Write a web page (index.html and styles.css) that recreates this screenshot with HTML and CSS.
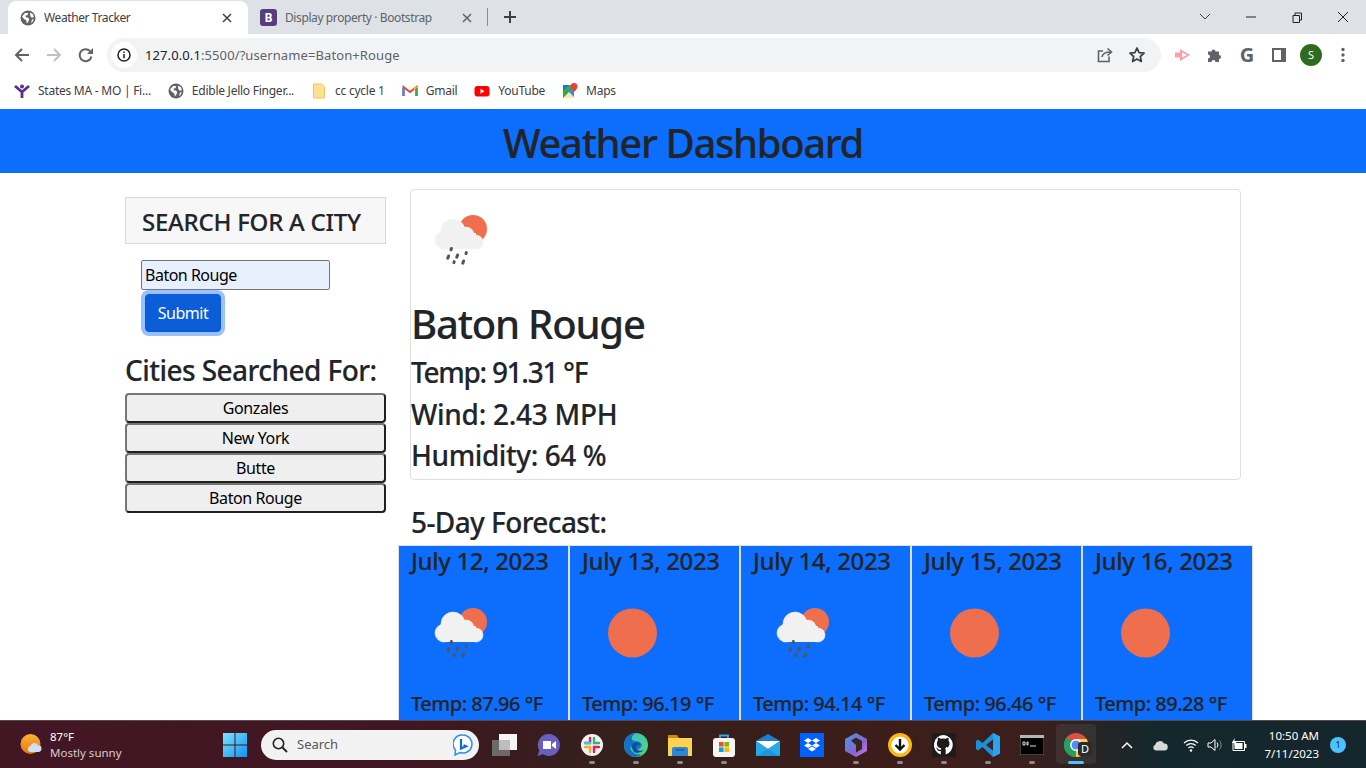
FILE: index.html
```html
<!DOCTYPE html>
<html lang="en">
<head>
    <meta charset="UTF-8">
    <meta name="viewport" content="width=device-width, initial-scale=1.0">
    <title>Weather Tracker</title>
    <link rel="stylesheet" href="styles.css">
</head>
<body>
    <svg class="defs" width="0" height="0">
        <symbol id="rainIcon" viewBox="0 0 100 100">
            <circle cx="62" cy="38" r="14" fill="#ee6e4d"/>
            <g fill="#f1f1f1" stroke="currentColor" stroke-width="0.6">
                <circle cx="33" cy="49" r="9"/>
                <circle cx="42" cy="40" r="12"/>
                <circle cx="55" cy="44" r="8"/>
                <circle cx="65" cy="51" r="7"/>
            </g>
            <path fill="#f1f1f1" d="M33 42h32v16H33z M30 46h5v12h-5z"/>
            <g stroke="#555" stroke-width="3" stroke-linecap="round">
                <path d="M40.4 57.5l-.4 1.4M37.6 65l-.8 2.2M46.6 64l-.8 2.2M55.3 61.6l-.3 1"/>
                <path d="M43.2 70.6l-.3 1M52.6 70l-.8 2.2"/>
            </g>
        </symbol>
        <symbol id="sunIcon" viewBox="0 0 100 100">
            <circle cx="50.5" cy="49" r="24.5" fill="#ee6e4d"/>
        </symbol>
        <symbol id="globe" viewBox="0 0 16 16">
            <circle cx="8" cy="8" r="7.5" fill="#5f6368"/>
            <path fill="#fff" d="M2 6.5l3-3.6 3.4.2-1 2.1-1.6.4-.2 1.6 2.4.4 1.2 1.6-.9 2.6-1.5 1.6-.5-3L3.8 8.8zM10 2.5l3 1.8.9 3-2.2.4-1.4-1.7zM12 9.5l1.8-.4-1.3 3-1.5 1z"/>
        </symbol>
    </svg>

    <!-- browser window chrome -->
    <div class="tabbar">
        <div class="tab tab-active">
            <svg class="favicon" width="16" height="16"><use href="#globe"/></svg>
            <span class="tab-title">Weather Tracker</span>
            <svg class="tab-close" width="10" height="10" viewBox="0 0 10 10"><path d="M1 1l8 8M9 1l-8 8" stroke="#3c4043" stroke-width="1.5"/></svg>
        </div>
        <div class="tab">
            <span class="bs-logo">B</span>
            <span class="tab-title">Display property · Bootstrap</span>
            <svg class="tab-close" width="10" height="10" viewBox="0 0 10 10"><path d="M1 1l8 8M9 1l-8 8" stroke="#5f6368" stroke-width="1.5"/></svg>
        </div>
        <span class="tab-sep"></span>
        <svg class="new-tab" width="14" height="14" viewBox="0 0 14 14"><path d="M7 1v12M1 7h12" stroke="#3c4043" stroke-width="2"/></svg>
        <div class="win-controls">
            <svg width="46" height="16" viewBox="0 0 46 16"><path d="M18 5l5 5 5-5" fill="none" stroke="#3c4043"/></svg>
            <svg width="46" height="16" viewBox="0 0 46 16"><path d="M18 8h10" stroke="#202124"/></svg>
            <svg width="46" height="16" viewBox="0 0 46 16"><path d="M19 6.5h6.5v7H19z M21 6V4h6.500v7H26" fill="none" stroke="#202124" stroke-linejoin="round"/></svg>
            <svg width="46" height="16" viewBox="0 0 46 16"><path d="M18 3l10 10M28 3L18 13" stroke="#202124"/></svg>
        </div>
    </div>

    <div class="toolbar">
        <svg class="nav-btn" width="16" height="16" viewBox="0 0 16 16"><path d="M15 8H2M8 2L2 8l6 6" fill="none" stroke="#5f6368" stroke-width="2"/></svg>
        <svg class="nav-btn" width="16" height="16" viewBox="0 0 16 16"><path d="M1 8h13M8 2l6 6-6 6" fill="none" stroke="#bdc1c6" stroke-width="2"/></svg>
        <svg class="nav-btn" width="16" height="16" viewBox="0 0 16 16"><path d="M13.5 9.5A6 6 0 1 1 12 4" fill="none" stroke="#5f6368" stroke-width="2"/><path d="M15 1v6H9z" fill="#5f6368"/></svg>
        <div class="omnibox">
            <span class="site-info">
                <svg width="14" height="14" viewBox="0 0 14 14"><circle cx="7" cy="7" r="6" fill="none" stroke="#202124" stroke-width="1.5"/><path d="M7 6v4.200M7 3.5V5" stroke="#202124" stroke-width="1.5"/></svg>
            </span>
            <span class="url"><b>127.0.0.1</b>:5500/?username=Baton+Rouge</span>
            <svg class="omni-icon" width="16" height="16" viewBox="0 0 16 16"><path d="M12 9.5v5H1.500V4H6M5 10c.5-3.500 3-5 8.500-5M10.500 1.500L14.500 5l-4 3.500" fill="none" stroke="#5f6368" stroke-width="1.6"/></svg>
            <svg class="omni-icon" width="18" height="18" viewBox="0 0 18 18"><path d="M9 2l2.100 4.700 5 .5-3.800 3.300 1.100 5L9 13l-4.400 2.500 1.100-5L1.900 7.200l5-.5z" fill="none" stroke="#3c4043" stroke-width="1.7" stroke-linejoin="round"/></svg>
        </div>
        <div class="ext-icons">
            <svg width="18" height="14" viewBox="0 0 18 14"><path d="M1 4.500h5V1l10 6-10 6V9.500H1z" fill="#ff9ea3"/><path d="M8 4.500l5 2.500-5 2.500z" fill="#fff"/></svg>
            <svg width="16" height="16" viewBox="0 0 16 16"><path d="M1 4.500h3.500a2 2 0 0 1 4 0H12v3.500a2 2 0 0 1 0 4v3H8.500a2 2 0 0 0-4 0H1v-3.500a2 2 0 0 0 0-4z" fill="#5f6368"/></svg>
            <span class="ext-g">G</span>
            <svg width="14" height="14" viewBox="0 0 14 14"><path d="M0 0h14v14H0z" fill="#5f6368"/><path d="M2 2h7v10H2z" fill="#fff"/></svg>
            <span class="avatar">S</span>
            <svg width="4" height="16" viewBox="0 0 4 16"><circle cx="2" cy="2.500" r="1.700" fill="#5f6368"/><circle cx="2" cy="8" r="1.700" fill="#5f6368"/><circle cx="2" cy="13.500" r="1.700" fill="#5f6368"/></svg>
        </div>
    </div>

    <div class="bookmarks">
        <a class="bookmark">
            <svg width="16" height="16" viewBox="0 0 16 16"><circle cx="8" cy="3.500" r="2" fill="#5c2d91"/><path d="M1 3l7 6 7-6M8 8v7" fill="none" stroke="#5c2d91" stroke-width="2.800"/></svg>
            <span>States MA - MO | Fi...</span>
        </a>
        <a class="bookmark">
            <svg width="16" height="16"><use href="#globe"/></svg>
            <span>Edible Jello Finger...</span>
        </a>
        <a class="bookmark">
            <svg width="16" height="16" viewBox="0 0 16 16"><path d="M2.500 1h8l3 3v11h-11z" fill="#fde293" stroke="#e8c65c"/></svg>
            <span>cc cycle 1</span>
        </a>
        <a class="bookmark">
            <svg width="16" height="16" viewBox="0 0 16 16"><path d="M1.500 13V4l6.500 5 6.500-5v9" fill="none" stroke="#ea4335" stroke-width="2"/><path d="M1.500 13V5" stroke="#4285f4" stroke-width="2.400"/><path d="M14.500 13V5" stroke="#34a853" stroke-width="2.400"/><path d="M12 6l2.500-2" stroke="#fbbc04" stroke-width="2"/></svg>
            <span>Gmail</span>
        </a>
        <a class="bookmark">
            <svg width="16" height="16" viewBox="0 0 16 16"><rect x="0.5" y="3" width="15" height="10.5" rx="3" fill="#f00"/><path d="M6.500 5.800l4 2.450-4 2.450z" fill="#fff"/></svg>
            <span>YouTube</span>
        </a>
        <a class="bookmark">
            <svg width="16" height="16" viewBox="0 0 16 16"><path d="M1 2h11v13H1z" fill="#34a853"/><path d="M1 15L12 4v11z" fill="#4285f4"/><path d="M1 15l6-6 6 6z" fill="#fbe9a7"/><path d="M1 2h6L1 8z" fill="#1a73e8"/><path d="M12 0a3.500 3.500 0 0 1 3.500 3.500C15.500 6 12 9 12 9S8.500 6 8.500 3.500A3.500 3.500 0 0 1 12 0z" fill="#ea4335"/></svg>
            <span>Maps</span>
        </a>
    </div>

    <!-- the page itself -->
    <div class="viewport">
        <header class="site-header">
            <h1>Weather Dashboard</h1>
        </header>

        <div class="container">
            <aside class="sidebar">
                <h4 class="search-title">SEARCH FOR A CITY</h4>
                <form class="search-form">
                    <input class="city-input" type="text" value="Baton Rouge">
                    <button class="submit-btn" type="button">Submit</button>
                </form>
                <h3 class="cities-title">Cities Searched For:</h3>
                <div class="city-list">
                    <button class="city-btn" type="button">Gonzales</button>
                    <button class="city-btn" type="button">New York</button>
                    <button class="city-btn" type="button">Butte</button>
                    <button class="city-btn" type="button">Baton Rouge</button>
                </div>
            </aside>

            <main class="content">
                <section class="current">
                    <svg class="weather-icon current-icon"><use href="#rainIcon"/></svg>
                    <h1>Baton Rouge</h1>
                    <h3 class="stat-temp">Temp: 91.31 °F</h3>
                    <h3 class="stat-wind">Wind: 2.43 MPH</h3>
                    <h3 class="stat-humidity">Humidity: 64 %</h3>
                </section>

                <h3 class="forecast-title">5-Day Forecast:</h3>
                <div class="forecast">
                    <div class="day">
                        <h4>July 12, 2023</h4>
                        <svg class="weather-icon"><use href="#rainIcon"/></svg>
                        <h5>Temp: 87.96 °F</h5>
                    </div>
                    <div class="day">
                        <h4>July 13, 2023</h4>
                        <svg class="weather-icon"><use href="#sunIcon"/></svg>
                        <h5>Temp: 96.19 °F</h5>
                    </div>
                    <div class="day">
                        <h4>July 14, 2023</h4>
                        <svg class="weather-icon"><use href="#rainIcon"/></svg>
                        <h5>Temp: 94.14 °F</h5>
                    </div>
                    <div class="day">
                        <h4>July 15, 2023</h4>
                        <svg class="weather-icon"><use href="#sunIcon"/></svg>
                        <h5>Temp: 96.46 °F</h5>
                    </div>
                    <div class="day">
                        <h4>July 16, 2023</h4>
                        <svg class="weather-icon"><use href="#sunIcon"/></svg>
                        <h5>Temp: 89.28 °F</h5>
                    </div>
                </div>
            </main>
        </div>
    </div>

    <!-- windows taskbar -->
    <footer class="taskbar">
        <div class="tb-weather">
            <svg width="24" height="24" viewBox="0 0 24 24"><defs><linearGradient id="wSun" x1="0" y1="0" x2="0" y2="1"><stop offset="0" stop-color="#f9b233"/><stop offset="1" stop-color="#e8760f"/></linearGradient></defs><circle cx="10.500" cy="11" r="10" fill="url(#wSun)"/><path d="M10 19a3 3 0 0 1 .5-5.900 4 4 0 0 1 7.500-.8 3.400 3.400 0 0 1 3.500 3.300A3.400 3.400 0 0 1 18 19z" fill="#cfe0f4"/></svg>
            <div class="tb-weather-text">
                <span class="tb-temp">87°F</span>
                <span class="tb-cond">Mostly sunny</span>
            </div>
        </div>
        <div class="tb-start">
            <svg width="24" height="24" viewBox="0 0 24 24"><defs><linearGradient id="winBlue" x1="0" y1="0" x2="1" y2="1"><stop offset="0" stop-color="#7de3fb"/><stop offset="1" stop-color="#0f94f2"/></linearGradient></defs><path d="M0 0h11.500v11.500H0zM12.500 0H24v11.500H12.500zM0 12.500h11.500V24H0zM12.500 12.500H24V24H12.500z" fill="url(#winBlue)"/></svg>
        </div>
        <div class="tb-search">
            <svg width="16" height="16" viewBox="0 0 16 16"><circle cx="6.500" cy="6.500" r="5.200" fill="none" stroke="#222" stroke-width="1.6"/><path d="M10.500 10.500l4.500 4.500" stroke="#222" stroke-width="1.8"/></svg>
            <span class="tb-search-label">Search</span>
            <svg class="tb-bing" width="20" height="22" viewBox="0 0 20 22"><path d="M10 1a9 9 0 1 1-3 17.500L2 21l.5-5A9 9 0 0 1 10 1z" fill="#fff" stroke="#2f8fe8" stroke-width="1.5"/><path d="M8 5v9.500l5-2.200-2.500-1" fill="none" stroke="#1166d8" stroke-width="2.2"/></svg>
        </div>
        <div class="tb-apps">
            <span class="tb-app">
                <svg width="26" height="24" viewBox="0 0 26 24"><rect x="8" y="1" width="18" height="16" fill="#f4f4f4"/><rect x="1" y="7" width="18" height="16" fill="#6a6a6a"/><rect x="8" y="7" width="11" height="10" fill="#bdbdbd"/></svg>
            </span>
            <span class="tb-app">
                <svg width="24" height="24" viewBox="0 0 24 24"><path d="M13 1a11 11 0 1 1-6 20.300L1.500 23l1.800-5.500A11 11 0 0 1 13 1z" fill="#6a5fc0"/><path d="M7 8h8v8H7zM16 11l4-3v8l-4-3z" fill="#fff"/></svg>
            </span>
            <span class="tb-app tb-open">
                <svg width="22" height="22" viewBox="0 0 22 22"><circle cx="11" cy="11" r="11" fill="#f4f1ee"/><path d="M9 4v5H4M13 18v-5h5" fill="none" stroke="#e01e5a" stroke-width="2.4" stroke-linecap="round"/><path d="M4 13h5v5" fill="none" stroke="#ecb22e" stroke-width="2.4" stroke-linecap="round"/><path d="M13 4v5h5" fill="none" stroke="#2eb67d" stroke-width="2.4" stroke-linecap="round"/><path d="M4 9h5" stroke="#36c5f0" stroke-width="2.4" stroke-linecap="round"/></svg>
            </span>
            <span class="tb-app tb-open">
                <svg width="24" height="24" viewBox="0 0 24 24"><defs><linearGradient id="edgeG" x1="0" y1="0" x2="1" y2="1"><stop offset="0" stop-color="#2cc1d8"/><stop offset="1" stop-color="#5ed36a"/></linearGradient></defs><circle cx="12" cy="12" r="12" fill="url(#edgeG)"/><path d="M0 12C0 5 6 0 12 0c-6 3-5 8-1 8 5 0 8 3 6 6-3 4-9 3-11-1 0 6 6 10 12 8a12 12 0 0 1-6 3C5 24 0 18 0 12z" fill="#1372c4"/><path d="M8 13c1-4 6-5 9-1-1-1-5-1-5 2s4 5 8 3a10 10 0 0 1-7 3c-3 0-5-3-5-7z" fill="#0c4f9e"/></svg>
            </span>
            <span class="tb-app tb-open">
                <svg width="24" height="22" viewBox="0 0 24 22"><path d="M0 1h9l2 3H0z" fill="#c88a10"/><path d="M0 4h24v18H0z" fill="#fcd24f"/><path d="M4 15a2 2 0 0 1 2-2h12a2 2 0 0 1 2 2v7H4z" fill="#2b86d3"/><path d="M8 16h8" stroke="#1a5ea8" stroke-width="1.5"/></svg>
            </span>
            <span class="tb-app tb-open">
                <svg width="24" height="24" viewBox="0 0 24 24"><path d="M8 6V2.500h8V6" fill="none" stroke="#2ea8e6" stroke-width="1.8"/><rect x="1" y="5" width="22" height="19" rx="3" fill="#f7f5f2"/><path d="M7 9h4.600v4.600H7z" fill="#f25022"/><path d="M12.400 9H17v4.600h-4.600z" fill="#7fba00"/><path d="M7 14.400h4.600V19H7z" fill="#00a4ef"/><path d="M12.400 14.400H17V19h-4.600z" fill="#ffb900"/></svg>
            </span>
            <span class="tb-app">
                <svg width="24" height="22" viewBox="0 0 24 22"><path d="M0 7L12 0l12 7v15H0z" fill="#1a7fd0"/><path d="M0 7h24L12 15z" fill="#fff"/><path d="M0 7l12 8 12-8v15H0z" fill="#29a9ea"/><path d="M0 22l12-7 12 7z" fill="#1f95dd"/></svg>
            </span>
            <span class="tb-app">
                <svg width="24" height="24" viewBox="0 0 24 24"><rect width="24" height="24" fill="#0061fe"/><path d="M8 5l4 2.500L8 10 4 7.500zM16 5l4 2.500-4 2.500-4-2.500zM8 10l4 2.500L8 15l-4-2.500zM16 10l4 2.500-4 2.500-4-2.500zM8 16l4-2.500 4 2.500-4 2.600z" fill="#fff"/></svg>
            </span>
            <span class="tb-app tb-open">
                <svg width="22" height="24" viewBox="0 0 22 24"><defs><linearGradient id="m365" x1="0" y1="0" x2="1" y2="1"><stop offset="0" stop-color="#3f9ee0"/><stop offset="0.6" stop-color="#8a63d2"/><stop offset="1" stop-color="#c77fd8"/></linearGradient></defs><path d="M11 0l11 6v12l-11 6-11-6V6z" fill="url(#m365)"/><path d="M6 7.500l5-3 6 3.500v8l-6 3.500V12z" fill="#3a2320"/></svg>
            </span>
            <span class="tb-app tb-open">
                <svg width="24" height="24" viewBox="0 0 24 24"><circle cx="12" cy="12" r="10.300" fill="#fff" stroke="#fdb813" stroke-width="3.4"/><path d="M12 6v10M7.500 12l4.500 4.500 4.500-4.500" fill="none" stroke="#111" stroke-width="2.4"/></svg>
            </span>
            <span class="tb-app tb-open">
                <svg width="24" height="24" viewBox="0 0 24 24"><rect width="24" height="24" fill="#211a1b"/><path d="M12 2a10 10 0 0 0-3.200 19.500v-3.400c-2.800.6-3.400-1.300-3.400-1.300-.5-1.200-1.100-1.500-1.100-1.500-.9-.6.100-.6.100-.6 1 .1 1.500 1 1.500 1 .9 1.500 2.300 1.100 2.900.8.100-.7.300-1.100.6-1.300-2.200-.3-4.500-1.100-4.500-5 0-1.100.4-2 1-2.700-.1-.3-.4-1.300.1-2.700 0 0 .8-.3 2.700 1a9.500 9.500 0 0 1 5 0c1.900-1.300 2.700-1 2.700-1 .5 1.400.2 2.400.1 2.700.6.700 1 1.600 1 2.700 0 3.900-2.300 4.700-4.500 5 .4.300.7.900.7 1.900v4.400A10 10 0 0 0 12 2z" fill="#fff"/></svg>
            </span>
            <span class="tb-app tb-open">
                <svg width="24" height="24" viewBox="0 0 24 24"><path d="M17 0l7 3.500v17L17 24 6.500 14 2 17.500 0 16V8l2-1.500L6.500 10z" fill="#1c8fd9"/><path d="M17 6.500v11L10 12z" fill="#3a2320"/><path d="M17 0l7 3.500v17L17 24z" fill="#2aa4ec"/></svg>
            </span>
            <span class="tb-app tb-open">
                <svg width="24" height="20" viewBox="0 0 24 20"><rect width="24" height="20" fill="#000" stroke="#777"/><rect width="24" height="3" fill="#b5b5b5"/><path d="M3 7h2v3H3zM7 7h1v3H7zM10 11h6" stroke="#ddd" fill="none"/></svg>
            </span>
            <span class="tb-app tb-active">
                <svg width="24" height="24" viewBox="0 0 24 24"><circle cx="12" cy="12" r="12" fill="#db4437"/><path d="M12 12L1.600 18A12 12 0 0 1 3 4.500z" fill="#0f9d58"/><path d="M12 12l10.400 6A12 12 0 0 1 1.600 18z" fill="#0f9d58"/><path d="M12 6h10.600A12 12 0 0 1 12 24z" fill="#ffcd40"/><circle cx="12" cy="12" r="5.200" fill="#4285f4" stroke="#fff" stroke-width="1.5"/></svg>
                <span class="chrome-badge">D</span>
            </span>
        </div>
        <div class="tb-tray">
            <svg class="tray-caret" width="12" height="8" viewBox="0 0 12 8"><path d="M1 7l5-5 5 5" fill="none" stroke="#fff" stroke-width="1.5"/></svg>
            <svg class="tray-cloud" width="16" height="12" viewBox="0 0 16 12"><path d="M4 11.500a3 3 0 0 1-.8-5.800A4.800 4.800 0 0 1 12 4.500a3.500 3.500 0 0 1 .5 7z" fill="#d8d8d8"/></svg>
            <svg class="tray-wifi" width="16" height="14" viewBox="0 0 16 14"><path d="M1 5a10 10 0 0 1 14 0M3.300 7.500a7 7 0 0 1 9.400 0M5.500 10a3.500 3.500 0 0 1 5 0" fill="none" stroke="#fff" stroke-width="1.2"/><circle cx="8" cy="12.500" r="1.200" fill="#fff"/></svg>
            <svg class="tray-vol" width="16" height="14" viewBox="0 0 16 14"><path d="M1 5h3l4-3.500v11L4 9H1z" fill="none" stroke="#fff"/><path d="M10 4.500a4 4 0 0 1 0 5" fill="none" stroke="#fff"/><path d="M12.500 2.500a7 7 0 0 1 0 9" fill="none" stroke="#888"/></svg>
            <svg class="tray-batt" width="16" height="14" viewBox="0 0 16 14"><path d="M2 3.500h11.500v9H2z" fill="none" stroke="#fff"/><path d="M3.500 5h8v6h-8z" fill="#fff"/><path d="M14 6h1.500v4H14z" fill="#fff"/><path d="M3.500 0L1 5h2.500L2.500 8l3-4H3.500z" fill="#fff"/></svg>
            <div class="tb-clock">
                <span>10:50 AM</span>
                <span>7/11/2023</span>
            </div>
            <span class="tb-badge">1</span>
        </div>
    </footer>
</body>
</html>
```

FILE: styles.css
```css
* {
    box-sizing: border-box;
}

body {
    margin: 0;
    height: 768px;
    overflow: hidden;
    display: flex;
    flex-direction: column;
    font-family: "Noto Sans", "Open Sans", sans-serif;
    color: #212529;
    background-color: #fff;
}

.defs {
    position: absolute;
}

h1, h3, h4, h5 {
    margin: 0 0 8px;
    font-weight: 500;
    line-height: 1.2;
    -webkit-text-stroke: .15px;
}

h1 {
    font-size: 40px;
    letter-spacing: -.03em;
}

h3 {
    font-size: 28px;
}

h4 {
    font-size: 24px;
}

h5 {
    font-size: 20px;
}

/* browser chrome */
.tabbar {
    height: 34px;
    flex: none;
    display: flex;
    align-items: center;
    padding-left: 8px;
    background-color: #dee1e6;
    font-size: 12px;
    color: #3c4043;
}

.tab {
    width: 240px;
    height: 33px;
    margin-top: 1px;
    display: flex;
    align-items: center;
    padding: 0 16px 0 12px;
}

.tab-active {
    background-color: #fff;
    border-radius: 8px 8px 0 0;
}

.tab-title {
    flex: 1;
    margin-left: 8px;
    letter-spacing: -.4px;
}

.tab .bs-logo + .tab-title {
    color: #5f6368;
}

.bs-logo {
    width: 17px;
    height: 17px;
    border-radius: 3px;
    background-color: #563d7c;
    color: #fff;
    font-weight: 700;
    font-size: 12px;
    line-height: 17px;
    text-align: center;
}

.tab-sep {
    width: 1px;
    height: 18px;
    margin-left: -1px;
    background-color: #8a8d91;
}

.new-tab {
    margin-left: 15px;
}

.win-controls {
    margin-left: auto;
    display: flex;
}

.toolbar {
    height: 38px;
    flex: none;
    display: flex;
    align-items: center;
    background-color: #fff;
    padding: 4px 0 0 14px;
}

.nav-btn {
    margin-right: 16px;
}

.omnibox {
    width: 1054px;
    height: 34px;
    margin-left: -3px;
    display: flex;
    align-items: center;
    padding: 0 15px 0 4px;
    border-radius: 17px;
    background-color: #f1f3f4;
}

.site-info {
    width: 26px;
    height: 26px;
    border-radius: 50%;
    background-color: #fff;
    display: flex;
    align-items: center;
    justify-content: center;
}

.url {
    flex: 1;
    margin-left: 8px;
    font-size: 13px;
    letter-spacing: .1px;
    color: #5f6368;
}

.url b {
    font-weight: 400;
    color: #202124;
}

.omni-icon {
    margin-left: 15px;
}

.ext-icons {
    display: grid;
    grid-template-columns: repeat(6, 32px);
    justify-items: center;
    align-items: center;
    padding-left: 6px;
}

.ext-g {
    font-size: 20px;
    line-height: 22px;
    font-weight: 700;
    color: #5f6368;
}

.avatar {
    width: 22px;
    height: 22px;
    border-radius: 50%;
    background-color: #2f6b1e;
    color: #fff;
    font-size: 11px;
    line-height: 22px;
    text-align: center;
}

.bookmarks {
    height: 37px;
    flex: none;
    display: flex;
    align-items: center;
    gap: 17px;
    padding-left: 14px;
    background-color: #fff;
    font-size: 12px;
    letter-spacing: -.25px;
    color: #3c4043;
}

.bookmark {
    display: flex;
    align-items: center;
    gap: 8px;
}

/* page */
.viewport {
    flex: 1;
    overflow: hidden;
}

.site-header {
    height: 64px;
    background-color: #0d6efd;
    text-align: center;
}

.site-header h1 {
    margin: 0;
    line-height: 68px;
    letter-spacing: -.034em;
}

.container {
    width: 1140px;
    margin: 0 auto;
    display: grid;
    grid-template-columns: 285px 855px;
}

.sidebar {
    padding: 24px 12px 0;
}

.search-title {
    margin: 0;
    height: 47px;
    padding: 0 16px;
    line-height: 47px;
    letter-spacing: -.25px;
    background-color: rgba(0, 0, 0, .03);
    border: 1px solid rgba(0, 0, 0, .125);
}

.search-form {
    padding: 16px 16px 0;
}

.city-input {
    display: block;
    width: 189px;
    height: 30px;
    padding: 1px 3px;
    font: 16px "Noto Sans", sans-serif;
    letter-spacing: -.5px;
    color: #000;
    background-color: #e8f0fe;
    border: 1px solid #767676;
    border-radius: 2px;
}

.submit-btn {
    display: block;
    width: 76px;
    height: 38px;
    margin: 4px 0 0 4px;
    padding: 0;
    font: 16px "Noto Sans", sans-serif;
    letter-spacing: -.5px;
    color: #fff;
    background-color: #0b5ed7;
    border: 1px solid #0a58ca;
    border-radius: 4px;
    box-shadow: 0 0 0 4px #98c1fe;
}

.cities-title {
    margin: 22px 0 5px;
    white-space: nowrap;
    letter-spacing: -.02em;
}

.city-list {
    display: flex;
    flex-direction: column;
}

.city-btn {
    height: 30px;
    padding: 0;
    font: 16px "Noto Sans", sans-serif;
    letter-spacing: -.4px;
    color: #000;
    background-color: #efefef;
    border: 2px solid;
    border-color: #767676 #202020 #202020 #767676;
    border-radius: 4px;
}

.content {
    padding-top: 16px;
}

.current {
    height: 291px;
    margin: 0 12px;
    border: 1px solid rgba(0, 0, 0, .125);
    border-radius: 4px;
}

.stat-temp {
    letter-spacing: -.046em;
}

.stat-wind {
    letter-spacing: -.01em;
}

.stat-humidity {
    letter-spacing: -.015em;
}

.weather-icon {
    display: block;
    width: 100px;
    height: 100px;
}

.current-icon {
    margin: 1px 0 9px;
    color: #f1f1f1;
}

.forecast-title {
    margin: 26px 12px 5px 13px;
    letter-spacing: -.6px;
}

.forecast {
    display: grid;
    grid-template-columns: repeat(5, 171px);
}

.day {
    height: 200px;
    padding: 1px 12px 0;
    background-color: #0d6efd;
    border: 1px solid #dfdfdf;
}

.day h4 {
    margin-bottom: 9px;
    letter-spacing: -.016em;
}

.day h5 {
    margin-top: 8px;
    letter-spacing: -.025em;
}

.day .weather-icon {
    color: #f1f1f1;
}

/* taskbar */
.taskbar {
    height: 48px;
    flex: none;
    display: flex;
    align-items: center;
    border-top: 1px solid #5a4a4c;
    background: linear-gradient(90deg, #431623 0%, #3f1722 30%, #34201c 45%, #3c1d1a 65%, #3b1f1c 75%, #13282d 85%, #15262c 100%);
    color: #fff;
}

.tb-weather {
    width: 213px;
    display: flex;
    align-items: center;
    gap: 6px;
    padding-left: 20px;
}

.tb-weather-text {
    display: flex;
    flex-direction: column;
    font-size: 11.5px;
    line-height: 16px;
}

.tb-cond {
    color: #d9cdd0;
}

.tb-start {
    width: 44px;
    display: flex;
    justify-content: center;
}

.tb-search {
    width: 218px;
    height: 30px;
    margin-left: 4px;
    display: flex;
    align-items: center;
    padding: 0 6px 0 11px;
    border-radius: 15px;
    background-color: #f3f2f2;
}

.tb-search-label {
    flex: 1;
    margin: 0 0 2px 9px;
    font-size: 13px;
    color: #555;
}

.tb-apps {
    margin-left: 3px;
    display: flex;
}

.tb-app {
    position: relative;
    width: 44px;
    height: 47px;
    display: flex;
    align-items: center;
    justify-content: center;
}

.tb-open::after {
    content: "";
    position: absolute;
    left: 19px;
    bottom: 4px;
    width: 6px;
    height: 3px;
    border-radius: 2px;
    background-color: #8f8a88;
}

.tb-active::before {
    content: "";
    position: absolute;
    left: 2px;
    top: 3px;
    width: 40px;
    height: 40px;
    border-radius: 4px;
    background-color: rgba(255, 255, 255, .07);
}

.tb-active::after {
    content: "";
    position: absolute;
    left: 14px;
    bottom: 4px;
    width: 16px;
    height: 3px;
    border-radius: 2px;
    background-color: #4cc2ff;
}

.chrome-badge {
    position: absolute;
    left: 24px;
    top: 21px;
    width: 14px;
    height: 14px;
    border-radius: 3px;
    background-color: #2b2b2b;
    font-size: 11px;
    line-height: 14px;
    text-align: center;
}

.tb-tray {
    flex: 1;
    display: flex;
    align-items: center;
}

.tray-caret {
    margin-left: 23px;
}

.tray-cloud {
    margin-left: 19px;
}

.tray-wifi {
    margin-left: 15px;
}

.tray-vol {
    margin-left: 8px;
}

.tray-batt {
    margin-left: 8px;
}

.tb-clock {
    width: 76px;
    margin-left: -4px;
    display: flex;
    flex-direction: column;
    align-items: flex-end;
    font-size: 11.5px;
    line-height: 18px;
}

.tb-badge {
    width: 16px;
    height: 16px;
    margin-left: 11px;
    border-radius: 50%;
    background-color: #4cc2ff;
    color: #12282d;
    font-size: 9px;
    line-height: 16px;
    text-align: center;
}
```
